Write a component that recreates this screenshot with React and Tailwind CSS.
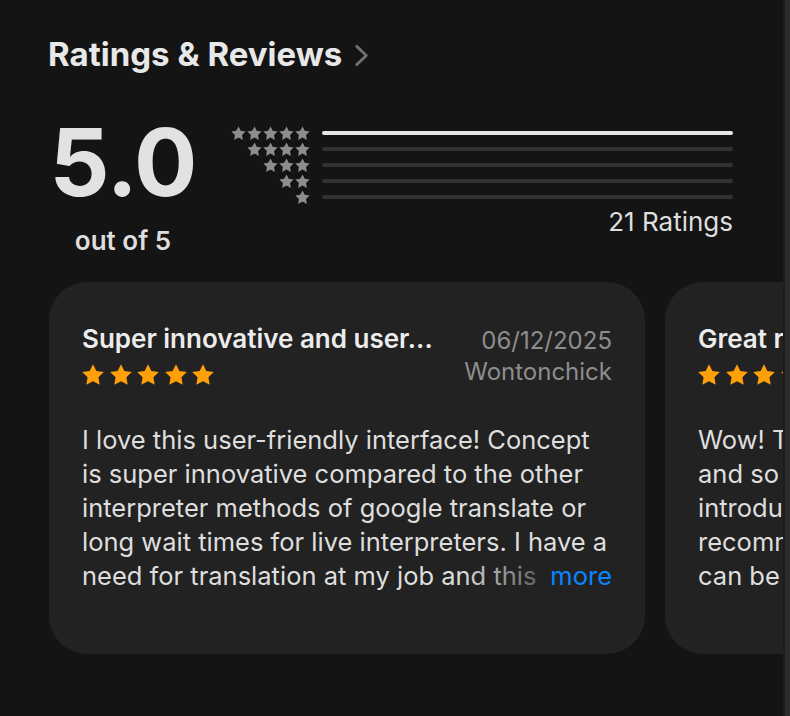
import React from "react";

const FONT = { fontFamily: "Inter, 'Noto Sans', sans-serif" };

function Star({ className }) {
  return (
    <svg viewBox="0 0 24 24" className={className} fill="currentColor">
      <polygon points="12,2 15.09,8.26 22,9.27 17,14.14 18.18,21.02 12,17.77 5.82,21.02 7,14.14 2,9.27 8.91,8.26" />
    </svg>
  );
}

const histogram = [
  { stars: 5, pct: 100 },
  { stars: 4, pct: 0 },
  { stars: 3, pct: 0 },
  { stars: 2, pct: 0 },
  { stars: 1, pct: 0 },
];

const reviews = [
  {
    title: "Super innovative and user...",
    date: "06/12/2025",
    author: "Wontonchick",
    lines: [
      "I love this user-friendly interface! Concept",
      "is super innovative compared to the other",
      "interpreter methods of google translate or",
      "long wait times for live interpreters. I have a",
    ],
    last: "need for translation at my job and this",
  },
  {
    title: "Great resource for travel",
    date: "05/28/2025",
    author: "Marisol",
    lines: [
      "Wow! This app is so helpful",
      "and so easy to use. I was",
      "introduced to it by a coworker",
      "recommend it to anyone who",
    ],
    last: "can be a little slow sometimes",
  },
];

function ReviewCard({ review }) {
  return (
    <div className="w-[596px] h-[372px] shrink-0 rounded-[38px] bg-[#222222] px-[33px] pt-[43px]">
      <div className="flex justify-between">
        <div>
          <div className="text-[26px] leading-[28px] font-semibold text-[#ececec] whitespace-nowrap">
            {review.title}
          </div>
          <div className="mt-[9px] flex gap-[5.5px] text-[#ff9f0a]">
            {[0, 1, 2, 3, 4].map((i) => (
              <Star key={i} className="w-[26px] h-[26px] -mx-[2px]" />
            ))}
          </div>
        </div>
        <div className="text-right text-[24px] leading-[31px] text-[#8d8d8d] whitespace-nowrap">
          <div>{review.date}</div>
          <div>{review.author}</div>
        </div>
      </div>
      <div className="mt-[35px] text-[25.5px] leading-[34px] text-[#dedede] whitespace-nowrap">
        {review.lines.map((l) => (
          <div key={l}>{l}</div>
        ))}
        <div className="relative overflow-hidden">
          <div>{review.last}</div>
          <div className="absolute right-0 top-0 flex h-full">
            <div className="w-[80px] bg-linear-to-r from-[#22222200] to-[#222222aa]" />
            <div className="bg-[#222222] pl-[12px] text-[#0a84ff]">more</div>
          </div>
        </div>
      </div>
    </div>
  );
}

export default function App() {
  return (
    <div className="flex w-[790px] h-[716px] bg-[#141414]" style={FONT}>
      <div className="w-[783px] overflow-hidden">
        <div className="pl-[48px] pt-[34px] flex items-center gap-[12px]">
          <h2 className="text-[33px] leading-[40px] font-bold text-[#e8e8e8]">Ratings &amp; Reviews</h2>
          <svg viewBox="0 0 15 24" className="w-[15px] h-[23px] mt-[2px]" fill="none" stroke="#6f6f6f" strokeWidth="3" strokeLinecap="round" strokeLinejoin="round">
            <path d="M2.5 2.5l10 9.5-10 9.5" />
          </svg>
        </div>

        <div className="mt-[41px] flex pl-[48px] pr-[50px]">
          <div className="flex flex-col items-center w-[150px]">
            <div className="text-[94px] leading-[94px] font-bold tracking-[-1px] text-[#e2e2e2]">5.0</div>
            <div className="mt-[18px] text-[26px] leading-[28px] font-semibold text-[#dedede]">out of 5</div>
          </div>
          <div className="ml-[32px] flex-1 pt-[10px]">
            {histogram.map((row) => (
              <div key={row.stars} className="flex items-center h-[16px]">
                <div className="w-[80px] flex justify-end text-[#8e8e8e]">
                  {Array.from({ length: row.stars }).map((_, i) => (
                    <Star key={i} className="w-[17px] h-[17px] -mx-[0.5px] shrink-0" />
                  ))}
                </div>
                <div className="ml-[12px] flex-1 h-[4px] rounded-full bg-[#323232]">
                  <div className="h-full rounded-full bg-[#e6e6e6]" style={{ width: `${row.pct}%` }} />
                </div>
              </div>
            ))}
            <div className="mt-[3px] text-right text-[26px] leading-[28px] text-[#dedede]">21 Ratings</div>
          </div>
        </div>

        <div className="mt-[27px] flex gap-[20px] pl-[49px]">
          {reviews.map((r) => (
            <ReviewCard key={r.author} review={r} />
          ))}
        </div>
      </div>
      <div className="w-[2px] bg-[#1b1b1b]" />
      <div className="flex-1 bg-[#2b2b2b]" />
    </div>
  );
}
